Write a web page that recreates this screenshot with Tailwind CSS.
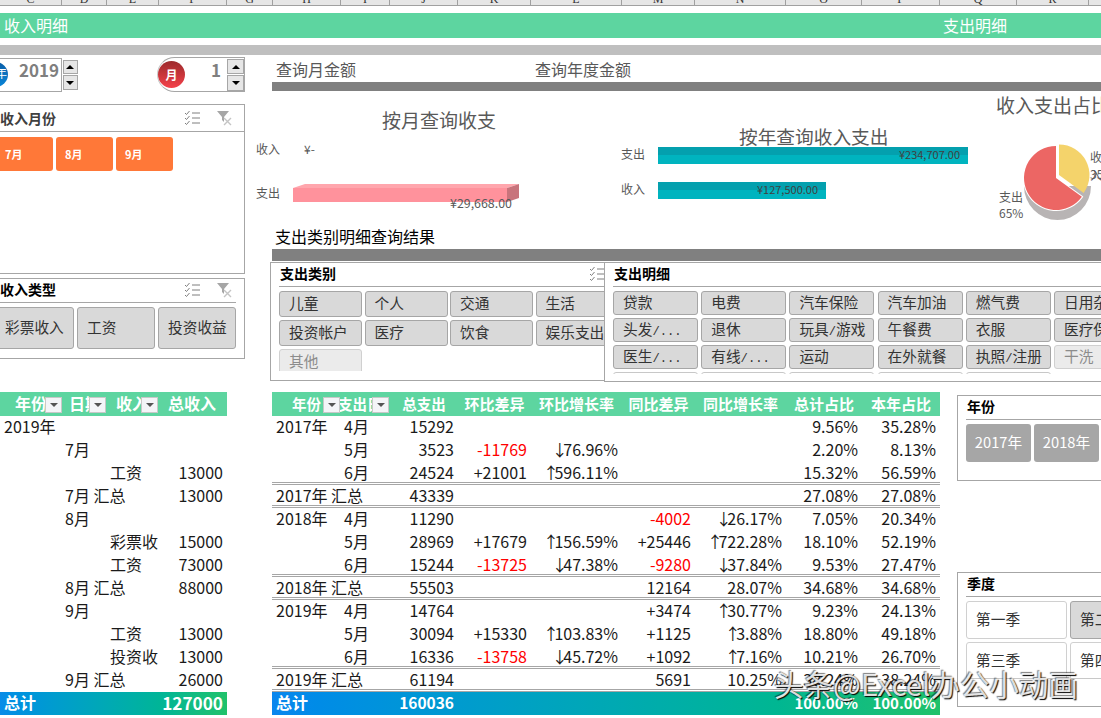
<!DOCTYPE html>
<html lang="zh-CN">
<head>
  <meta charset="UTF-8" />
  <title>收入支出明细</title>
  <script src="https://cdn.jsdelivr.net/npm/@tailwindcss/browser@4"></script>
</head>
<body class="bg-white">
<div class="relative w-[1101px] h-[718px] overflow-hidden bg-white text-[16px] text-[#1a1a1a] font-['Noto_Sans_CJK_SC','Noto_Sans',sans-serif]">

  <!-- Column letters -->
  <div id="cols" class="flex h-[6px] bg-[#e6e6e6] border-b border-[#a0a0a0] overflow-hidden font-['Liberation_Serif',serif] text-[12px] text-[#333]"></div>

  <!-- Title bars -->
  <div class="flex justify-between items-center h-[25px] mt-[7px] pb-[1px] bg-[#5dd5a0] text-white pl-[4px] pr-[94px]">
    <span>收入明细</span><span>支出明细</span>
  </div>
  <div class="h-[10px] mt-[7px] bg-[#bfbfbf]"></div>

  <div class="flex">
    <!-- Left column -->
    <div class="w-[245px] shrink-0">
      <div class="flex h-[37px]">
        <div class="relative w-[64px] h-[34px] mt-[3px] border border-l-0 border-[#a6a6a6] pl-[19px] text-[17px] font-bold text-[#7f7f7f] leading-[22px]">
          <span class="absolute left-[-17px] top-[3px] w-[25px] h-[25px] rounded-full bg-gradient-to-b from-[#0a5ea8] to-[#0a86d8] text-white text-[12px] text-right pr-[1px] font-normal">年</span>
          2019
        </div>
        <div class="ml-[1px] mt-[5px] w-[16px]">
          <div class="flex items-center justify-center h-[14px] bg-[#e6e6e6] border border-[#a6a6a6]"><span class="w-0 h-0 border-x-[4px] border-x-transparent border-b-[4px] border-b-black"></span></div>
          <div class="flex items-center justify-center h-[15px] mt-[1px] bg-[#e6e6e6] border border-[#a6a6a6]"><span class="w-0 h-0 border-x-[4px] border-x-transparent border-t-[4px] border-t-black"></span></div>
        </div>
        <div class="relative flex ml-[79px] mt-[2px] w-[90px] h-[35px] border border-[#a6a6a6] rounded-l-[18px] border-l-[#c8c8c8]">
          <span class="absolute left-0 top-[3px] w-[27px] h-[27px] rounded-full bg-gradient-to-b from-[#9c2a2c] to-[#f5414a] text-white text-[12px] font-bold flex items-center justify-center">月</span>
          <span class="ml-[53px] w-[16px] text-[17px] font-bold text-[#7f7f7f] leading-[23px]">1</span>
          <div class="ml-[0px] mt-[1px] w-[17px]">
            <div class="flex items-center justify-center h-[15px] bg-[#e6e6e6] border border-[#a6a6a6]"><span class="w-0 h-0 border-x-[4px] border-x-transparent border-b-[4px] border-b-black"></span></div>
            <div class="flex items-center justify-center h-[16px] mt-[1px] bg-[#e6e6e6] border border-[#a6a6a6]"><span class="w-0 h-0 border-x-[4px] border-x-transparent border-t-[4px] border-t-black"></span></div>
          </div>
        </div>
      </div>

      <!-- 收入月份 slicer -->
      <div class="h-[170px] mt-[12px] border border-l-0 border-[#a6a6a6]">
        <div class="flex items-center h-[27px] border-b border-[#a6a6a6] text-[14px] font-bold text-[#404040]">
          <span class="flex-1">收入月份</span>
          <svg class="mr-[15px]" width="17" height="16" viewBox="0 0 17 16" fill="none" stroke="#7f7f7f"><path d="M1 3l1.5 1.5L5.5 1M1 8l1.5 1.5L5.5 6M1 13l1.5 1.5L5.5 11M8 3h8M8 8h8M8 13h8"/></svg>
          <svg class="mr-[11px]" width="17" height="16" viewBox="0 0 17 16"><path d="M1 1h12L8 7v5L6 10V7z" fill="#a6a6a6"/><path d="M8 8l7 7M15 8l-7 7" stroke="#c4c4c4" stroke-width="1.4"/></svg>
        </div>
        <div class="flex gap-[3px] mt-[5px] -ml-[4px] text-[11px] font-bold text-white">
          <div class="w-[57px] h-[34px] rounded-[3px] bg-[#ff7838] pl-[9px] leading-[34px]">7月</div>
          <div class="w-[57px] h-[34px] rounded-[3px] bg-[#ff7838] pl-[9px] leading-[34px]">8月</div>
          <div class="w-[57px] h-[34px] rounded-[3px] bg-[#ff7838] pl-[9px] leading-[34px]">9月</div>
        </div>
      </div>

      <!-- 收入类型 slicer -->
      <div class="h-[81px] mt-[4px] border border-l-0 border-[#a6a6a6]">
        <div class="flex items-center h-[24px] w-[236px] pb-[2px] border-b border-[#a6a6a6] text-[14px] font-bold text-black">
          <span class="flex-1">收入类型</span>
          <svg class="mr-[15px]" width="17" height="16" viewBox="0 0 17 16" fill="none" stroke="#7f7f7f"><path d="M1 3l1.5 1.5L5.5 1M1 8l1.5 1.5L5.5 6M1 13l1.5 1.5L5.5 11M8 3h8M8 8h8M8 13h8"/></svg>
          <svg class="mr-[3px]" width="17" height="16" viewBox="0 0 17 16"><path d="M1 1h12L8 7v5L6 10V7z" fill="#a6a6a6"/><path d="M8 8l7 7M15 8l-7 7" stroke="#c4c4c4" stroke-width="1.4"/></svg>
        </div>
        <div class="flex gap-[3px] mt-[4px] -ml-[5px] text-[14.7px] text-[#333]">
          <div class="w-[79px] h-[42px] shrink-0 rounded-[3px] bg-[#d9d9d9] border border-[#a6a6a6] pl-[9px] leading-[38px]">彩票收入</div>
          <div class="w-[78px] h-[42px] shrink-0 rounded-[3px] bg-[#d9d9d9] border border-[#a6a6a6] pl-[9px] leading-[38px]">工资</div>
          <div class="w-[78px] h-[42px] shrink-0 rounded-[3px] bg-[#d9d9d9] border border-[#a6a6a6] pl-[9px] leading-[38px]">投资收益</div>
        </div>
      </div>

      <!-- 收入 pivot -->
      <div class="w-[227px] mt-[33px]">
        <div class="grid grid-cols-[62px_45px_52px_68px] h-[24px] bg-[#5dd5a0] text-white font-bold leading-[23px]">
          <div class="flex overflow-hidden"><span class="w-[45px] pl-[15px] overflow-hidden whitespace-nowrap">年份</span><span class="flex items-center justify-center w-[17px] h-[16px] mt-[5px] bg-[#f4f5f8] border border-[#c8c8c8] shrink-0"><i class="w-0 h-0 border-x-[4px] border-x-transparent border-t-[4px] border-t-[#555]"></i></span></div>
          <div class="flex overflow-hidden"><span class="w-[27px] pl-[7px] overflow-hidden whitespace-nowrap">日期</span><span class="flex items-center justify-center w-[17px] h-[16px] mt-[5px] bg-[#f4f5f8] border border-[#c8c8c8] shrink-0"><i class="w-0 h-0 border-x-[4px] border-x-transparent border-t-[4px] border-t-[#555]"></i></span></div>
          <div class="flex overflow-hidden"><span class="w-[34px] pl-[9px] overflow-hidden whitespace-nowrap">收入类型</span><span class="flex items-center justify-center w-[17px] h-[16px] mt-[5px] bg-[#f4f5f8] border border-[#c8c8c8] shrink-0"><i class="w-0 h-0 border-x-[4px] border-x-transparent border-t-[4px] border-t-[#555]"></i></span></div>
          <div class="pl-[9px]">总收入</div>
        </div>
        <div id="incomeRows"></div>
        <div class="flex justify-between h-[23px] px-[4px] bg-gradient-to-r from-[#0a8ce8] to-[#20c26a] text-white font-bold leading-[21px]">
          <span>总计</span><span class="text-[17.2px]">127000</span>
        </div>
      </div>
    </div>

    <!-- Right part -->
    <div class="flex-1 min-w-0">
      <div class="flex items-center h-[27px] pt-[1px] pl-[31px] text-[#595959]">
        <span class="w-[259px]">查询月金额</span><span>查询年度金额</span>
      </div>
      <div class="h-[9px] ml-[27px] bg-[#808080]"></div>

      <!-- Charts -->
      <div class="flex h-[137px] text-[12px] text-[#595959]">
        <div class="w-[365px] ml-[11px] shrink-0">
          <div class="h-[26px] mt-[16px] pl-[126px] text-[19px] leading-[26px]">按月查询收支</div>
          <div class="flex items-center h-[16px] mt-[8px]"><span class="w-[48px]">收入</span><span>¥-</span></div>
          <div class="relative flex items-end h-[18px] mt-[27px]">
            <span class="w-[37px] leading-[16px] mb-[1px]">支出</span>
            <svg width="226" height="18" viewBox="0 0 226 18"><path d="M0 4L12 0H226L214 4z" fill="#ffa6ad"/><rect y="4" width="214" height="14" fill="#ff929c"/><path d="M214 4L226 0V14L214 18z" fill="#c8747c"/></svg>
            <span class="absolute left-[194px] top-[10px] text-[12.4px]">¥29,668.00</span>
          </div>
        </div>
        <div class="w-[375px] shrink-0">
          <div class="h-[22px] mt-[34px] pl-[118px] text-[18.7px] leading-[22px]">按年查询收入支出</div>
          <div class="flex h-[17px]">
            <span class="w-[37px] leading-[14px]">支出</span>
            <div class="w-[310px] h-[17px] bg-[linear-gradient(#04a0ae_50%,#00b4bf_50%)] text-right pr-[8px] leading-[15px] text-[11px] text-[#404040]">¥234,707.00</div>
          </div>
          <div class="flex h-[17px] mt-[18px]">
            <span class="w-[37px] leading-[14px]">收入</span>
            <div class="w-[168px] h-[17px] bg-[linear-gradient(#04a0ae_50%,#00b4bf_50%)] text-right pr-[8px] leading-[15px] text-[11px] text-[#404040]">¥127,500.00</div>
          </div>
        </div>
        <div class="relative flex-1 min-w-0">
          <div class="h-[26px] mt-[2px] text-[19px] leading-[24px] whitespace-nowrap">收入支出占比</div>
          <svg class="absolute left-[24px] top-[49px]" width="81" height="85" viewBox="0 0 81 85">
            <path d="M4 46A33.5 34 0 0 0 71 46z" fill="#b8b4b4"/>
            <path d="M36 38V6A32 32 0 1 0 61.9 56.8z" fill="#ec6664" stroke="#fff" stroke-width="2" paint-order="stroke"/>
            <path d="M39 35V4.5A30.5 30.5 0 0 1 63.7 52.9z" fill="#f4d36b"/>
          </svg>
          <span class="absolute left-[94px] top-[57px]">收入</span>
          <span class="absolute left-[94px] top-[74px]">35%</span>
          <span class="absolute left-[3px] top-[97px]">支出</span>
          <span class="absolute left-[3px] top-[113px]">65%</span>
        </div>
      </div>

      <div class="h-[21px] pl-[30px] text-black leading-[17px]">支出类别明细查询结果</div>
      <div class="h-[12px] ml-[27px] bg-[#808080]"></div>

      <!-- 支出 slicers -->
      <div class="flex mt-[1px] h-[120px]">
        <div class="w-[345px] h-[119px] ml-[25px] shrink-0 border border-[#a6a6a6] px-[8px]">
          <div class="relative h-[24px] border-b border-[#a6a6a6] text-[14px] font-bold text-black leading-[21px] pl-[1px]">支出类别
            <svg class="absolute left-[310px] top-[3px]" width="17" height="16" viewBox="0 0 17 16" fill="none" stroke="#7f7f7f"><path d="M1 3l1.5 1.5L5.5 1M1 8l1.5 1.5L5.5 6M1 13l1.5 1.5L5.5 11M8 3h8M8 8h8M8 13h8"/></svg>
          </div>
          <div class="grid grid-cols-[83px_83px_83px_83px] gap-x-[2.5px] gap-y-[3px] mt-[4px] h-[80px] overflow-hidden text-[14.7px] text-[#333]">
            <div class="h-[26px] rounded-[3px] bg-[#d9d9d9] border border-[#a6a6a6] pl-[9px] leading-[22px]">儿童</div>
            <div class="h-[26px] rounded-[3px] bg-[#d9d9d9] border border-[#a6a6a6] pl-[9px] leading-[22px]">个人</div>
            <div class="h-[26px] rounded-[3px] bg-[#d9d9d9] border border-[#a6a6a6] pl-[9px] leading-[22px]">交通</div>
            <div class="h-[26px] rounded-[3px] bg-[#d9d9d9] border border-[#a6a6a6] pl-[9px] leading-[22px]">生活</div>
            <div class="h-[26px] rounded-[3px] bg-[#d9d9d9] border border-[#a6a6a6] pl-[9px] leading-[22px]">投资帐户</div>
            <div class="h-[26px] rounded-[3px] bg-[#d9d9d9] border border-[#a6a6a6] pl-[9px] leading-[22px]">医疗</div>
            <div class="h-[26px] rounded-[3px] bg-[#d9d9d9] border border-[#a6a6a6] pl-[9px] leading-[22px]">饮食</div>
            <div class="h-[26px] rounded-[3px] bg-[#d9d9d9] border border-[#a6a6a6] pl-[9px] leading-[22px] whitespace-nowrap">娱乐支出</div>
            <div class="h-[26px] rounded-[3px] bg-[#ebebeb] border border-[#d0d0d0] pl-[9px] leading-[22px] text-[#8c8c8c]">其他</div>
          </div>
        </div>
        <div class="relative z-10 w-[520px] h-[120px] -ml-[11px] shrink-0 border border-[#a6a6a6] bg-white pl-[8px]">
          <div class="h-[24px] border-b border-[#a6a6a6] text-[14px] font-bold text-black leading-[21px] pl-[1px]">支出明细</div>
          <div class="grid grid-cols-[85px_85px_85px_85px_85px_85px] gap-x-[3.2px] gap-y-[3px] mt-[4px] h-[83px] overflow-hidden text-[14.7px] text-[#333]">
            <div class="h-[24px] rounded-[3px] bg-[#d9d9d9] border border-[#a6a6a6] pl-[9px] leading-[19px]">贷款</div>
            <div class="h-[24px] rounded-[3px] bg-[#d9d9d9] border border-[#a6a6a6] pl-[9px] leading-[19px]">电费</div>
            <div class="h-[24px] rounded-[3px] bg-[#d9d9d9] border border-[#a6a6a6] pl-[9px] leading-[19px]">汽车保险</div>
            <div class="h-[24px] rounded-[3px] bg-[#d9d9d9] border border-[#a6a6a6] pl-[9px] leading-[19px]">汽车加油</div>
            <div class="h-[24px] rounded-[3px] bg-[#d9d9d9] border border-[#a6a6a6] pl-[9px] leading-[19px]">燃气费</div>
            <div class="h-[24px] rounded-[3px] bg-[#d9d9d9] border border-[#a6a6a6] pl-[9px] leading-[19px] whitespace-nowrap">日用杂货</div>
            <div class="h-[24px] rounded-[3px] bg-[#d9d9d9] border border-[#a6a6a6] pl-[9px] leading-[19px] whitespace-nowrap">头发<span class="font-['Liberation_Mono'] text-[12.2px]">/...</span></div>
            <div class="h-[24px] rounded-[3px] bg-[#d9d9d9] border border-[#a6a6a6] pl-[9px] leading-[19px]">退休</div>
            <div class="h-[24px] rounded-[3px] bg-[#d9d9d9] border border-[#a6a6a6] pl-[9px] leading-[19px] whitespace-nowrap">玩具<span class="font-['Liberation_Mono'] text-[12.2px]">/</span>游戏</div>
            <div class="h-[24px] rounded-[3px] bg-[#d9d9d9] border border-[#a6a6a6] pl-[9px] leading-[19px]">午餐费</div>
            <div class="h-[24px] rounded-[3px] bg-[#d9d9d9] border border-[#a6a6a6] pl-[9px] leading-[19px]">衣服</div>
            <div class="h-[24px] rounded-[3px] bg-[#d9d9d9] border border-[#a6a6a6] pl-[9px] leading-[19px] whitespace-nowrap">医疗保险</div>
            <div class="h-[24px] rounded-[3px] bg-[#d9d9d9] border border-[#a6a6a6] pl-[9px] leading-[19px] whitespace-nowrap">医生<span class="font-['Liberation_Mono'] text-[12.2px]">/...</span></div>
            <div class="h-[24px] rounded-[3px] bg-[#d9d9d9] border border-[#a6a6a6] pl-[9px] leading-[19px] whitespace-nowrap">有线<span class="font-['Liberation_Mono'] text-[12.2px]">/...</span></div>
            <div class="h-[24px] rounded-[3px] bg-[#d9d9d9] border border-[#a6a6a6] pl-[9px] leading-[19px]">运动</div>
            <div class="h-[24px] rounded-[3px] bg-[#d9d9d9] border border-[#a6a6a6] pl-[9px] leading-[19px]">在外就餐</div>
            <div class="h-[24px] rounded-[3px] bg-[#d9d9d9] border border-[#a6a6a6] pl-[9px] leading-[19px] whitespace-nowrap">执照<span class="font-['Liberation_Mono'] text-[12.2px]">/</span>注册</div>
            <div class="h-[24px] rounded-[3px] bg-[#ebebeb] border border-[#d0d0d0] pl-[9px] leading-[19px] text-[#8c8c8c]">干洗</div>
            <div class="h-[24px] rounded-[3px] border border-[#c8c8c8]"></div>
            <div class="h-[24px] rounded-[3px] border border-[#c8c8c8]"></div>
            <div class="h-[24px] rounded-[3px] border border-[#c8c8c8]"></div>
            <div class="h-[24px] rounded-[3px] border border-[#c8c8c8]"></div>
            <div class="h-[24px] rounded-[3px] border border-[#c8c8c8]"></div>
          </div>
        </div>
      </div>

      <!-- 支出 pivot + right slicers -->
      <div class="flex mt-[10px]">
        <div class="w-[668px] ml-[27px] shrink-0">
          <div class="grid grid-cols-[68px_49px_68px_73px_91px_73px_91px_76px_78px] h-[24px] bg-[#5dd5a0] text-white font-bold leading-[23px] text-[15px] text-center whitespace-nowrap">
            <div class="flex justify-end"><span class="flex-1 pl-[20px] text-left text-[14.5px]">年份</span><span class="flex items-center justify-center w-[17px] h-[16px] mt-[5px] bg-[#f4f5f8] border border-[#c8c8c8] shrink-0"><i class="w-0 h-0 border-x-[4px] border-x-transparent border-t-[4px] border-t-[#555]"></i></span></div>
            <div class="flex overflow-hidden"><span class="w-[32px] text-left -indent-[2px] overflow-hidden text-[14.5px]">支出日期</span><span class="flex items-center justify-center w-[17px] h-[16px] mt-[5px] bg-[#f4f5f8] border border-[#c8c8c8] shrink-0"><i class="w-0 h-0 border-x-[4px] border-x-transparent border-t-[4px] border-t-[#555]"></i></span></div>
            <div class="pl-[2px] text-[14.5px]">总支出</div><div class="pl-[2px]">环比差异</div><div class="pl-[2px]">环比增长率</div><div class="pl-[2px]">同比差异</div><div class="pl-[2px]">同比增长率</div><div class="pl-[2px]">总计占比</div><div class="pl-[2px]">本年占比</div>
          </div>
          <div id="spendRows"></div>
          <div class="grid grid-cols-[68px_49px_68px_73px_91px_73px_91px_76px_78px] h-[23px] bg-gradient-to-r from-[#0a86ee] to-[#20c26a] text-white font-bold leading-[21px] text-right">
            <div class="text-left pl-[4px] col-span-2">总计</div>
            <div class="pr-[3px] text-[15.5px]">160036</div><div></div><div></div><div></div><div></div>
            <div class="pr-[3px] text-[15px]">100.00%</div><div class="pr-[3px] text-[15px]">100.00%</div>
          </div>
        </div>
        <div class="ml-[17px] w-[200px] shrink-0">
          <div class="h-[86px] mt-[3px] border border-[#a6a6a6] pl-[8px]">
            <div class="h-[24px] border-b border-[#a6a6a6] text-[14px] font-bold text-black leading-[20px] pl-[1px]">年份</div>
            <div class="flex gap-[3px] mt-[4px] text-[14.7px] text-white">
              <div class="w-[65px] h-[38px] rounded-[3px] bg-[#a6a6a6] text-center leading-[36px]">2017年</div>
              <div class="w-[65px] h-[38px] rounded-[3px] bg-[#a6a6a6] text-center leading-[36px]">2018年</div>
            </div>
          </div>
          <div class="h-[135px] mt-[91px] border border-[#a6a6a6] pl-[8px]">
            <div class="h-[24px] border-b border-[#a6a6a6] text-[14px] font-bold text-black leading-[20px] pl-[1px]">季度</div>
            <div class="grid grid-cols-[101px_101px] gap-[3px] mt-[4px] h-[78px] border-b border-[#c8c8c8] overflow-hidden text-[14.7px] text-[#333]">
              <div class="h-[38px] rounded-[3px] border border-[#d0d0d0] pl-[9px] leading-[34px]">第一季</div>
              <div class="h-[38px] rounded-[3px] bg-[#d9d9d9] border border-[#a6a6a6] pl-[9px] leading-[34px]">第二季</div>
              <div class="h-[38px] rounded-[3px] border border-[#d0d0d0] pl-[9px] leading-[34px]">第三季</div>
              <div class="h-[38px] rounded-[3px] border border-[#d0d0d0] pl-[9px] leading-[34px]">第四季</div>
            </div>
          </div>
        </div>
      </div>
    </div>
  </div>

  <!-- Watermark -->
  <div class="absolute left-[774px] top-[666px] text-[29.5px] leading-[34px] whitespace-nowrap text-white/85 [text-shadow:1px_1px_1px_#000,-1px_-1px_1px_rgba(0,0,0,0.5)]">头条@Excel办公小动画</div>
</div>

<script>
  const columns = [['C',62],['D',45],['E',52],['F',68],['G',46],['H',68],['I',49],['J',68],['K',73],['L',91],['M',73],['N',91],['O',76],['P',78],['Q',77],['R',72],['S',40]];
  document.getElementById('cols').innerHTML = columns.map(([name, w]) =>
    `<div class="flex items-end justify-center shrink-0 h-[5px] border-r border-[#a0a0a0] leading-[12px]" style="width:${w}px"><span>${name}</span></div>`
  ).join('');

  const income = [
    ['2019年','','',''],
    ['','7月','',''],
    ['','','工资','13000'],
    ['','7月 汇总','','13000'],
    ['','8月','',''],
    ['','','彩票收','15000'],
    ['','','工资','73000'],
    ['','8月 汇总','','88000'],
    ['','9月','',''],
    ['','','工资','13000'],
    ['','','投资收','13000'],
    ['','9月 汇总','','26000'],
  ];
  document.getElementById('incomeRows').innerHTML = income.map(r => `
    <div class="grid grid-cols-[62px_45px_52px_68px] h-[23px] leading-[21px] whitespace-nowrap">
      <div class="pl-[4px]">${r[0]}</div><div class="pl-[3px]">${r[1]}</div><div class="pl-[3px]">${r[2]}</div><div class="pr-[4px] text-right">${r[3]}</div>
    </div>`).join('');

  const spend = [
    ['2017年','4月','15292','','','','','9.56%','35.28%'],
    ['','5月','3523','-11769','↓76.96%','','','2.20%','8.13%'],
    ['','6月','24524','+21001','↑596.11%','','','15.32%','56.59%'],
    ['2017年 汇总','','43339','','','','','27.08%','27.08%'],
    ['2018年','4月','11290','','','-4002','↓26.17%','7.05%','20.34%'],
    ['','5月','28969','+17679','↑156.59%','+25446','↑722.28%','18.10%','52.19%'],
    ['','6月','15244','-13725','↓47.38%','-9280','↓37.84%','9.53%','27.47%'],
    ['2018年 汇总','','55503','','','12164','28.07%','34.68%','34.68%'],
    ['2019年','4月','14764','','','+3474','↑30.77%','9.23%','24.13%'],
    ['','5月','30094','+15330','↑103.83%','+1125','↑3.88%','18.80%','49.18%'],
    ['','6月','16336','-13758','↓45.72%','+1092','↑7.16%','10.21%','26.70%'],
    ['2019年 汇总','','61194','','','5691','10.25%','38.24%','38.24%'],
  ];
  // arrows in the CJK font are a full em wide, pull them in to the narrow width of the reference
  const arrow = v => v.replace(/^([↑↓])/, '<span class="-mx-[4.5px]">$1</span>');
  document.getElementById('spendRows').innerHTML = spend.map((r, i) => {
    const isTotal = r[0].includes('汇总');
    const beforeTotal = spend[i + 1] && spend[i + 1][0].includes('汇总');
    const line = isTotal || beforeTotal ? 'border-b-[3px] border-double border-[#a6a6a6]' : '';
    const cell = v => `<div class="pr-[3px] text-right ${v.startsWith('-') ? 'text-[#ff0000]' : ''}">${arrow(v)}</div>`;
    return `<div class="grid grid-cols-[68px_49px_68px_73px_91px_73px_91px_76px_78px] h-[23px] leading-[21px] whitespace-nowrap ${line}">
      <div class="pl-[4px]">${r[0]}</div><div class="pl-[4px]">${r[1]}</div>${r.slice(2).map(v => cell(v)).join('')}
    </div>`;
  }).join('');
</script>
</body>
</html>
